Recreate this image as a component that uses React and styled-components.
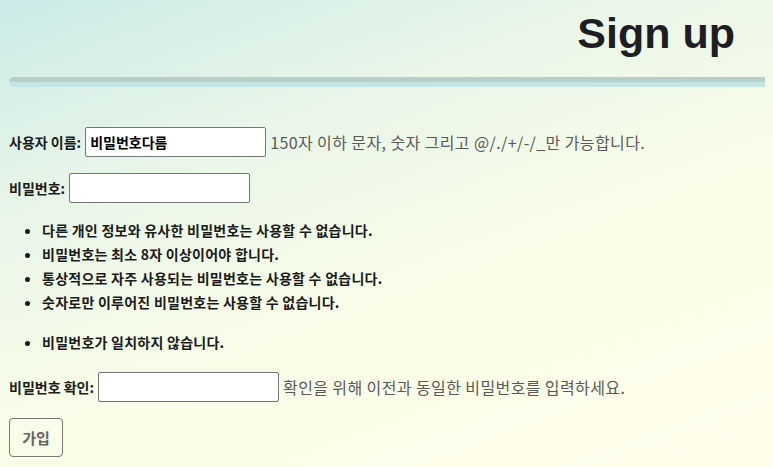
import React from "react";
import styled, { createGlobalStyle } from "styled-components";

const GlobalStyle = createGlobalStyle`
  html {
    margin: 0;
    padding: 0;
    overflow: hidden;
  }
  body {
    margin: 8px;
    min-height: 451px;
    background: linear-gradient(160deg, #cbeae7 0%, #e9f6e8 30%, #fafde8 60%, #fffeec 100%);
    background-attachment: fixed;
    font-family: "Noto Sans CJK KR", "Noto Sans", sans-serif;
  }
`;

const Header = styled.header`
  display: block;
`;

const Title = styled.h1`
  margin: 1px 0 0 0;
  padding-right: 30px;
  text-align: right;
  font-family: "Liberation Sans", Arial, sans-serif;
  font-weight: 700;
  font-size: 43px;
  line-height: 48px;
  color: #1e1e22;
`;

const Bar = styled.div`
  margin: 20px 0 0 1px;
  width: calc(100vw - 9px);
  height: 0;
  border-top: 5px solid #b6cfcb;
  border-bottom: 5px solid #c2e6e3;
  border-radius: 5px 0 0 5px;
`;

const Form = styled.form`
  display: flex;
  flex-direction: column;
  align-items: flex-start;
  margin-top: 40px;
`;

const Row = styled.div`
  display: flex;
  align-items: center;
  gap: 4px;
  margin-bottom: ${(p) => p.$mb || 0}px;
`;

const Label = styled.label`
  font-size: 14px;
  font-weight: 700;
  color: #1b1b1b;
  padding-left: 1px;
`;

const Input = styled.input`
  box-sizing: border-box;
  width: 181px;
  height: 30px;
  border: 1px solid #767676;
  border-radius: 2px;
  background: #fff;
  padding: 0 4px;
  font-family: "Noto Sans CJK KR", sans-serif;
  font-size: 14px;
  font-weight: 700;
  color: #000;
  outline: none;
`;

const Help = styled.span`
  font-size: 16px;
  font-weight: 400;
  color: #595959;
  letter-spacing: 0.4px;
`;

const Rules = styled.ul`
  margin: 0 0 ${(p) => p.$mb || 0}px 0;
  padding-left: 34px;
  font-size: 14px;
  font-weight: 700;
  color: #1b1b1b;
  line-height: 24px;
  letter-spacing: 0.25px;
`;

const Button = styled.button`
  width: 54px;
  height: 39px;
  border: 1px solid #777;
  border-radius: 4px;
  background: transparent;
  font-family: "Noto Sans CJK KR", sans-serif;
  font-size: 15px;
  font-weight: 700;
  color: #666;
  padding: 0;
  margin-left: 1px;
`;

export default function App() {
  return (
    <>
      <GlobalStyle />
      <Header>
        <Title>Sign up</Title>
        <Bar />
      </Header>
      <Form onSubmit={(e) => e.preventDefault()}>
        <Row $mb={16}>
          <Label>사용자 이름:</Label>
          <Input type="text" defaultValue="비밀번호다름" />
          <Help>150자 이하 문자, 숫자 그리고 @/./+/-/_만 가능합니다.</Help>
        </Row>
        <Row $mb={15}>
          <Label>비밀번호:</Label>
          <Input type="password" />
        </Row>
        <Rules $mb={16}>
          <li>다른 개인 정보와 유사한 비밀번호는 사용할 수 없습니다.</li>
          <li>비밀번호는 최소 8자 이상이어야 합니다.</li>
          <li>통상적으로 자주 사용되는 비밀번호는 사용할 수 없습니다.</li>
          <li>숫자로만 이루어진 비밀번호는 사용할 수 없습니다.</li>
        </Rules>
        <Rules $mb={18}>
          <li>비밀번호가 일치하지 않습니다.</li>
        </Rules>
        <Row $mb={16}>
          <Label>비밀번호 확인:</Label>
          <Input type="password" />
          <Help>확인을 위해 이전과 동일한 비밀번호를 입력하세요.</Help>
        </Row>
        <Button type="submit">가입</Button>
      </Form>
    </>
  );
}
